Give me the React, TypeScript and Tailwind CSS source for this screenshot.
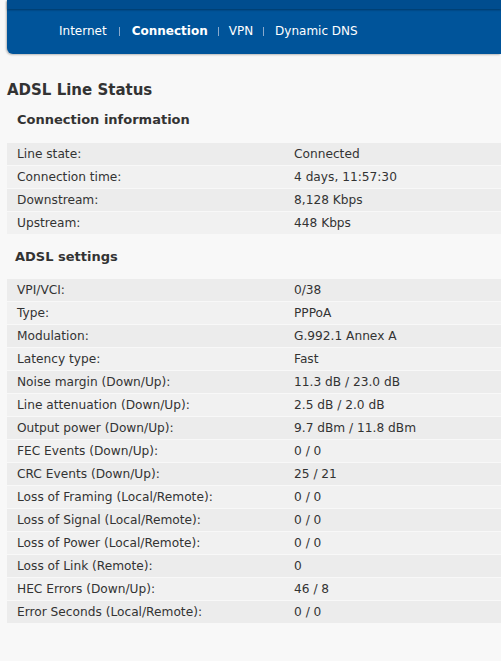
import React from "react";

const conn: [string, string][] = [
  ["Line state:", "Connected"],
  ["Connection time:", "4 days, 11:57:30"],
  ["Downstream:", "8,128 Kbps"],
  ["Upstream:", "448 Kbps"],
];

const adsl: [string, string][] = [
  ["VPI/VCI:", "0/38"],
  ["Type:", "PPPoA"],
  ["Modulation:", "G.992.1 Annex A"],
  ["Latency type:", "Fast"],
  ["Noise margin (Down/Up):", "11.3 dB / 23.0 dB"],
  ["Line attenuation (Down/Up):", "2.5 dB / 2.0 dB"],
  ["Output power (Down/Up):", "9.7 dBm / 11.8 dBm"],
  ["FEC Events (Down/Up):", "0 / 0"],
  ["CRC Events (Down/Up):", "25 / 21"],
  ["Loss of Framing (Local/Remote):", "0 / 0"],
  ["Loss of Signal (Local/Remote):", "0 / 0"],
  ["Loss of Power (Local/Remote):", "0 / 0"],
  ["Loss of Link (Remote):", "0"],
  ["HEC Errors (Down/Up):", "46 / 8"],
  ["Error Seconds (Local/Remote):", "0 / 0"],
];

function Rows({ rows }: { rows: [string, string][] }) {
  return (
    <div className="ml-[7px] flex flex-col gap-px">
      {rows.map(([k, v], i) => (
        <div
          key={k}
          className={`flex h-[22px] items-center ${i % 2 === 0 ? "bg-[#ececec]" : "bg-[#f1f1f1]"}`}
        >
          <div className="w-[287px] pl-[10px]">{k}</div>
          <div>{v}</div>
        </div>
      ))}
    </div>
  );
}

export default function App() {
  return (
    <div
      className="min-h-[661px] w-[501px] bg-[#f8f8f8] text-[12.2px] text-[#333]"
      style={{ fontFamily: '"DejaVu Sans", sans-serif' }}
    >
      <div className="ml-[7px] h-[54px] rounded-bl-[6px] bg-[#00549a] shadow-[-1px_1px_2px_rgba(0,0,0,0.25)]">
        <div className="h-[9px] bg-[#004d8f] shadow-[0_1px_2px_rgba(0,0,0,0.35)]" />
        <div className="flex items-center pl-[52px] pt-[13px] text-[12px] text-white">
          <span>Internet</span>
          <span className="mx-[12px] h-[9px] w-px bg-[#8aa9cc]" />
          <span className="font-bold">Connection</span>
          <span className="mx-[10px] h-[9px] w-px bg-[#8aa9cc]" />
          <span>VPN</span>
          <span className="ml-[10px] mr-[11px] h-[9px] w-px bg-[#8aa9cc]" />
          <span>Dynamic DNS</span>
        </div>
      </div>
      <div className="ml-[7px] mt-[27px] text-[15px] font-bold leading-[18px]">ADSL Line Status</div>
      <div className="ml-[17px] mt-[13px] text-[13px] font-bold leading-[16px]">Connection information</div>
      <div className="mt-[15px]">
        <Rows rows={conn} />
      </div>
      <div className="ml-[15px] mt-[15px] text-[13px] font-bold leading-[16px]">ADSL settings</div>
      <div className="mt-[14px]">
        <Rows rows={adsl} />
      </div>
    </div>
  );
}
